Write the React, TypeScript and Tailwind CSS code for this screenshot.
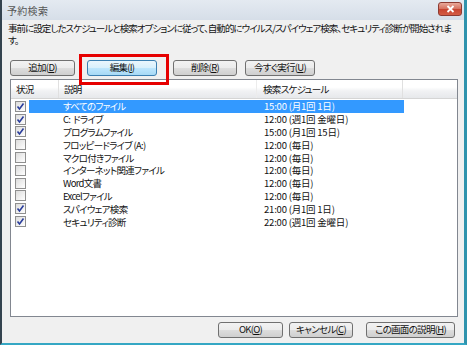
import React from "react";

const rows = [
  { on: true, name: "すべてのファイル", sch: "15:00 (月1回 1日)" },
  { on: true, name: "C:\u00a0\u00a0ドライブ", sch: "12:00 (週1回 金曜日)" },
  { on: true, name: "プログラムファイル", sch: "15:00 (月1回 15日)" },
  { on: false, name: "フロッピードライブ (A:)", sch: "12:00 (毎日)" },
  { on: false, name: "マクロ付きファイル", sch: "12:00 (毎日)" },
  { on: false, name: "インターネット関連ファイル", sch: "12:00 (毎日)" },
  { on: false, name: "Word文書", sch: "12:00 (毎日)" },
  { on: false, name: "Excelファイル", sch: "12:00 (毎日)" },
  { on: true, name: "スパイウェア検索", sch: "21:00 (月1回 1日)" },
  { on: true, name: "セキュリティ診断", sch: "22:00 (週1回 金曜日)" },
];

function Btn({ label, u, w, hot, className = "" }: { label: string; u: string; w: string; hot?: boolean; className?: string }) {
  return (
    <div
      className={`${w} h-[16px] rounded-[3px] border flex items-center justify-center ${className} ${
        hot
          ? "border-[#3c7fb1] bg-[linear-gradient(#eaf6fd_0%,#d9f0fc_50%,#bee6fd_51%,#a7d9f5_100%)]"
          : "border-[#707070] bg-[linear-gradient(#f2f2f2_0%,#ebebeb_50%,#dddddd_51%,#cfcfcf_100%)]"
      }`}
    >
      <span className="leading-none text-[#111]">
        {label}(<span className="underline">{u}</span>)
      </span>
    </div>
  );
}

function Check({ on }: { on: boolean }) {
  return (
    <div className="w-[11px] h-[11px] border border-[#8f8f8f] bg-[linear-gradient(135deg,#dcdcdc,#ffffff)] flex items-center justify-center">
      {on && (
        <svg width="9" height="9" viewBox="0 0 9 9">
          <path d="M1.5 4.5 L3.5 7 L7.5 1.5" stroke="#2a3d9c" strokeWidth="1.6" fill="none" />
        </svg>
      )}
    </div>
  );
}

export default function App() {
  return (
    <div
      className="relative w-[467px] h-[345px] overflow-hidden text-[9.5px] tracking-[-0.7px] text-[#111]"
      style={{ fontFamily: '"Noto Sans CJK JP", "Noto Sans", sans-serif', fontFeatureSettings: '"palt"' }}
    >
      <div className="w-full h-full flex flex-col border-l-[2px] border-l-[#34434f] border-r-[3px] border-r-[#2f93ad] border-b-[2px] border-b-[#35a7c4] bg-[#f0f0f0]">
        {/* title bar */}
        <div className="h-[20px] flex items-center justify-between bg-[linear-gradient(#e4eaf1,#d6dee8)] pl-[5px] pr-[2px]">
          <span className="text-[10px] text-[#555] tracking-[0.3px]">予約検索</span>
          <div className="w-[24px] h-[14px] mb-[2px] rounded-[3px] border border-[#8d3b32] bg-[linear-gradient(#e9a99a_0%,#d5705e_50%,#c7432f_51%,#d45d45_100%)] flex items-center justify-center">
            <svg width="9" height="8" viewBox="0 0 9 8">
              <path d="M1.5 1 L7.5 7 M7.5 1 L1.5 7" stroke="#fff" strokeWidth="1.8" />
            </svg>
          </div>
        </div>
        {/* body */}
        <div className="flex-1 flex flex-col pl-[6px] pr-[2px]">
          <div className="mt-[2px] flex flex-col leading-[12px] whitespace-nowrap tracking-[-0.95px]">
            <span>事前に設定したスケジュールと検索オプションに従って、自動的にウイルス/スパイウェア検索、セキュリティ診断が開始されま</span>
            <span>す。</span>
          </div>
          <div className="mt-[14px] flex">
            <Btn label="追加" u="D" w="w-[65px]" className="ml-[2px]" />
            <Btn label="編集" u="I" w="w-[70px]" hot className="ml-[12px]" />
            <Btn label="削除" u="R" w="w-[64px]" className="ml-[16px]" />
            <Btn label="今すぐ実行" u="U" w="w-[70px]" className="ml-[8px]" />
          </div>
          {/* list */}
          <div className="mt-[3px] ml-[2px] w-[448px] h-[238px] border border-[#828790] bg-white flex flex-col">
            <div className="h-[19px] flex items-center bg-[linear-gradient(#ffffff_0%,#ffffff_40%,#f1f2f4_60%,#e6e8eb_100%)] border-b border-[#d5d5d5]">
              <div className="w-[48px] pl-[5px] border-r border-[#e0e0e0] h-full flex items-center">状況</div>
              <div className="w-[198px] pl-[5px] border-r border-[#ececec] h-full flex items-center">説明</div>
              <div className="w-[146px] pl-[6px] border-r border-[#e0e0e0] h-full flex items-center">検索スケジュール</div>
              <div className="flex-1" />
            </div>
            <div className="flex flex-col mt-[1px]">
              {rows.map((r, i) => (
                <div key={i} className="h-[12.8px] flex items-center leading-[12px]">
                  <div className="w-[18px] pl-[4px] flex items-center">
                    <Check on={r.on} />
                  </div>
                  <div className={`w-[375px] h-full flex items-center ${i === 0 ? "bg-[#3399ff] text-white" : ""}`}>
                    <div className="w-[34px]" />
                    <div className="w-[201px] whitespace-nowrap">{r.name}</div>
                    <div className="whitespace-nowrap tracking-[-0.2px]">{r.sch}</div>
                  </div>
                </div>
              ))}
            </div>
          </div>
          <div className="mt-[5px] flex">
            <Btn label="OK" u="O" w="w-[65px]" className="ml-[210px]" />
            <Btn label="キャンセル" u="C" w="w-[64px]" className="ml-[6px]" />
            <Btn label="この画面の説明" u="H" w="w-[89px]" className="ml-[13px]" />
          </div>
        </div>
      </div>
      {/* red highlight */}
      <div className="absolute left-[79px] top-[54px] w-[90px] h-[31px] border-[3px] border-[#e60000]" />
    </div>
  );
}
